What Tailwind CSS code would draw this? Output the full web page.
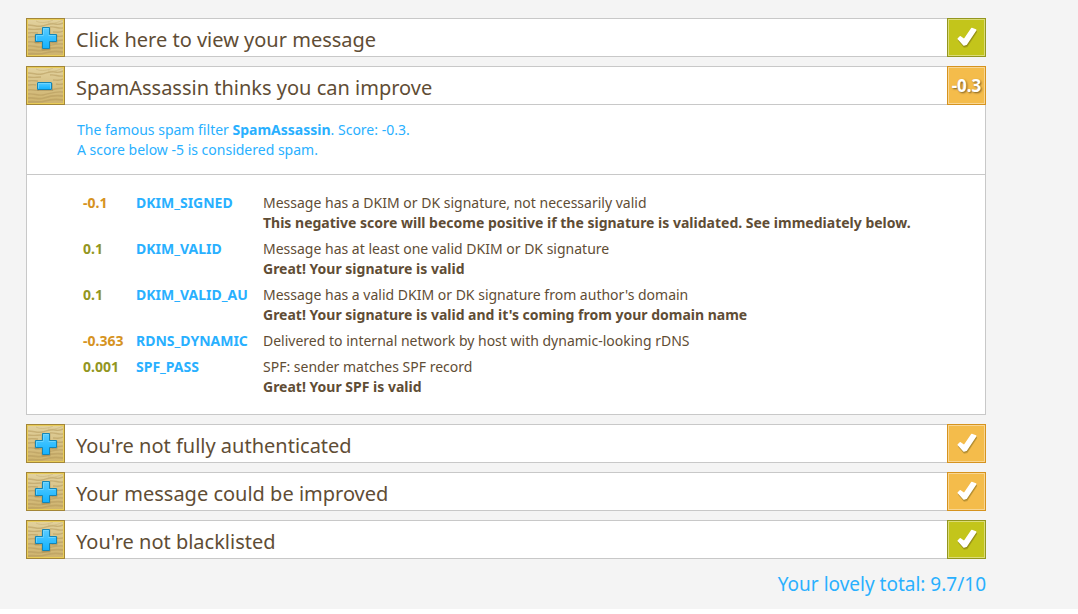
<!DOCTYPE html>
<html lang="en">
  <head>
    <meta charset="utf-8" />
    <meta name="viewport" content="width=device-width, initial-scale=1" />
    <title>Your message score</title>
    <script src="https://cdn.jsdelivr.net/npm/@tailwindcss/browser@4"></script>
  </head>
  <body class="bg-white font-['Noto_Sans',sans-serif] text-[#5f4d35]">
    <!-- Shared icons -->
    <svg class="absolute size-0" aria-hidden="true">
      <defs>
        <linearGradient id="woodFill" x1="0" y1="0" x2="0" y2="1">
          <stop offset="0" stop-color="#e3d3a0" />
          <stop offset="0.5" stop-color="#d6c084" />
          <stop offset="1" stop-color="#ceb26b" />
        </linearGradient>
        <linearGradient id="blueFill" x1="0" y1="0" x2="0" y2="1">
          <stop offset="0" stop-color="#5cccff" />
          <stop offset="0.5" stop-color="#35bfff" />
          <stop offset="1" stop-color="#12b2ff" />
        </linearGradient>
      </defs>
      <symbol id="wood" viewBox="0 0 39 39">
        <rect width="39" height="39" fill="url(#woodFill)" />
        <g fill="none" stroke="#b59a5c" stroke-width="1.4" opacity="0.55">
          <path d="M2 7c6 0 9 2 14 1s9-3 13-2 6 0 8-1" />
          <path d="M2 11c5 1 9 0 13 0M24 9c5-1 8 2 13 1" />
          <path d="M2 15c4-1 7 0 10 0M27 14c4 0 7 1 10-1" />
          <path d="M2 19c3 0 5-1 8 0M30 18c3 1 5 0 7 0" />
          <path d="M2 24c4-1 7 1 11 0M26 24c4-2 7-1 11-2" />
          <path d="M2 28c6-1 9 2 15 1s12-4 20-3" />
          <path d="M2 32c7-1 10 2 16 0s12-3 19-2" stroke-width="1.8" />
          <path d="M2 36c6-1 11 1 17-1s12-2 18-1" stroke-width="1.8" />
        </g>
        <path d="M10 3c5 3 13 1 17-1M22 5c6 1 11-1 15-3" fill="none" stroke="#c9b47a" opacity="0.6" />
        <rect x="1.5" y="1.5" width="36" height="36" fill="none" stroke="#e8cc58" />
        <rect x="0.5" y="0.5" width="38" height="38" fill="none" stroke="#a38638" />
      </symbol>
      <symbol id="plus" viewBox="0 0 39 39">
        <use href="#wood" />
        <path d="M16.5 10.5h7v7h7v7h-7v7h-7v-7h-7v-7h7z" fill="#796337" stroke="#796337" stroke-width="2" stroke-linejoin="round" opacity="0.3" />
        <path d="M16.5 9.5h7v7h7v7h-7v7h-7v-7h-7v-7h7z" fill="url(#blueFill)" stroke="#1585b5" stroke-linejoin="round" />
        <path d="M17.5 16.5v-6h5M10.5 22.5v-5h7M22.5 17.5h7" fill="none" stroke="#7bdcff" opacity="0.7" />
      </symbol>
      <symbol id="minus" viewBox="0 0 39 39">
        <use href="#wood" />
        <rect x="11" y="17" width="16" height="8" rx="1" fill="#796337" opacity="0.3" />
        <rect x="11.5" y="16.5" width="14" height="7" rx="0.5" fill="url(#blueFill)" stroke="#1585b5" />
        <path d="M12.5 22.500v-5h12v5" fill="none" stroke="#7bdcff" opacity="0.7" />
      </symbol>
      <symbol id="check" viewBox="0 0 39 39">
        <g stroke-width="1.6" stroke-linejoin="round">
          <path d="M12 22.800l2-2 3.800 2.800 7.500-11 4 1.400-9.500 14.500-2.500.5z" fill="#5f5210" stroke="#5f5210" opacity="0.25" />
          <path d="M11.800 21.800l2-2 3.800 2.800 7.500-11 4 1.400-9.500 14.500-2.500.5z" fill="#5f5210" stroke="#5f5210" opacity="0.3" />
          <path d="M11.300 20.800l2-2 3.900 2.800 7.500-11 4 1.400-9.500 14.300-2.300.6z" fill="#fff" stroke="#fff" />
        </g>
      </symbol>
    </svg>

    <main class="bg-[#f4f4f4] px-[26px] pt-[18px] pb-[11px]">
      <div class="max-w-[960px] space-y-[9px]">
        <section>
          <button type="button" aria-expanded="false" class="flex h-[39px] w-full cursor-pointer bg-white text-left">
            <svg class="size-[39px] shrink-0" aria-hidden="true"><use href="#plus" /></svg>
            <span class="h-full flex-1 border-y border-[#c8c8c8] pt-[5px] pl-[11px] text-xl leading-8">Click here to view your message</span>
            <span class="size-[39px] shrink-0 border border-[#93961f] bg-[#c3c51b] inset-ring inset-ring-[#dbdc77]">
              <svg class="-m-px size-[39px]" role="img" aria-label="Passed"><use href="#check" /></svg>
            </span>
          </button>
        </section>

        <section>
          <button type="button" aria-expanded="true" aria-controls="spamDetails" class="flex h-[39px] w-full cursor-pointer bg-white text-left">
            <svg class="size-[39px] shrink-0" aria-hidden="true"><use href="#minus" /></svg>
            <span class="h-full flex-1 border-y border-[#c8c8c8] pt-[5px] pl-[11px] text-xl leading-8">SpamAssassin thinks you can improve</span>
            <span class="flex size-[39px] shrink-0 items-center justify-center border border-[#d6931f] bg-[#f4bc4b] text-[17px] font-bold text-white inset-ring inset-ring-[#f8d693] text-shadow-[1px_1px_2px_#00000080]">-0.3</span>
          </button>

          <div id="spamDetails" class="border-x border-b border-[#c8c8c8] bg-white text-sm leading-5">
            <p class="border-b border-[#c8c8c8] pt-[15px] pb-[14px] pl-[50px] text-[#29b0ff]">
              The famous spam filter <b>SpamAssassin</b>. Score: -0.3.<br />
              A score below -5 is considered spam.
            </p>
            <div class="pt-[15px] pr-6 pb-[14px] pl-[53px]">
              <table class="w-full table-fixed">
                <colgroup>
                  <col class="w-[53px]" />
                  <col class="w-[127px]" />
                  <col />
                </colgroup>
                <tbody class="align-top">
                  <tr>
                    <td class="p-[3px] font-bold text-[#d6931f]">-0.1</td>
                    <th scope="row" class="p-[3px] text-left font-bold text-[#29b0ff]">DKIM_SIGNED</th>
                    <td class="p-[3px]">Message has a DKIM or DK signature, not necessarily valid<br /><b>This negative score will become positive if the signature is validated. See immediately below.</b></td>
                  </tr>
                  <tr>
                    <td class="p-[3px] font-bold text-[#93961f]">0.1</td>
                    <th scope="row" class="p-[3px] text-left font-bold text-[#29b0ff]">DKIM_VALID</th>
                    <td class="p-[3px]">Message has at least one valid DKIM or DK signature<br /><b>Great! Your signature is valid</b></td>
                  </tr>
                  <tr>
                    <td class="p-[3px] font-bold text-[#93961f]">0.1</td>
                    <th scope="row" class="p-[3px] text-left font-bold text-[#29b0ff]">DKIM_VALID_AU</th>
                    <td class="p-[3px]">Message has a valid DKIM or DK signature from author's domain<br /><b>Great! Your signature is valid and it's coming from your domain name</b></td>
                  </tr>
                  <tr>
                    <td class="p-[3px] font-bold text-[#d6931f]">-0.363</td>
                    <th scope="row" class="p-[3px] text-left font-bold text-[#29b0ff]">RDNS_DYNAMIC</th>
                    <td class="p-[3px]">Delivered to internal network by host with dynamic-looking rDNS</td>
                  </tr>
                  <tr>
                    <td class="p-[3px] font-bold text-[#93961f]">0.001</td>
                    <th scope="row" class="p-[3px] text-left font-bold text-[#29b0ff]">SPF_PASS</th>
                    <td class="p-[3px]">SPF: sender matches SPF record<br /><b>Great! Your SPF is valid</b></td>
                  </tr>
                </tbody>
              </table>
            </div>
          </div>
        </section>

        <section>
          <button type="button" aria-expanded="false" class="flex h-[39px] w-full cursor-pointer bg-white text-left">
            <svg class="size-[39px] shrink-0" aria-hidden="true"><use href="#plus" /></svg>
            <span class="h-full flex-1 border-y border-[#c8c8c8] pt-[5px] pl-[11px] text-xl leading-8">You're not fully authenticated</span>
            <span class="size-[39px] shrink-0 border border-[#d6931f] bg-[#f4bc4b] inset-ring inset-ring-[#f8d693]">
              <svg class="-m-px size-[39px]" role="img" aria-label="Can be improved"><use href="#check" /></svg>
            </span>
          </button>
        </section>

        <section>
          <button type="button" aria-expanded="false" class="flex h-[39px] w-full cursor-pointer bg-white text-left">
            <svg class="size-[39px] shrink-0" aria-hidden="true"><use href="#plus" /></svg>
            <span class="h-full flex-1 border-y border-[#c8c8c8] pt-[5px] pl-[11px] text-xl leading-8">Your message could be improved</span>
            <span class="size-[39px] shrink-0 border border-[#d6931f] bg-[#f4bc4b] inset-ring inset-ring-[#f8d693]">
              <svg class="-m-px size-[39px]" role="img" aria-label="Can be improved"><use href="#check" /></svg>
            </span>
          </button>
        </section>

        <section>
          <button type="button" aria-expanded="false" class="flex h-[39px] w-full cursor-pointer bg-white text-left">
            <svg class="size-[39px] shrink-0" aria-hidden="true"><use href="#plus" /></svg>
            <span class="h-full flex-1 border-y border-[#c8c8c8] pt-[5px] pl-[11px] text-xl leading-8">You're not blacklisted</span>
            <span class="size-[39px] shrink-0 border border-[#93961f] bg-[#c3c51b] inset-ring inset-ring-[#dbdc77]">
              <svg class="-m-px size-[39px]" role="img" aria-label="Passed"><use href="#check" /></svg>
            </span>
          </button>
        </section>

        <p class="pt-0.5 text-right text-[19px] leading-7 text-[#29b0ff]">Your lovely total: 9.7/10</p>
      </div>
    </main>
  </body>
</html>
